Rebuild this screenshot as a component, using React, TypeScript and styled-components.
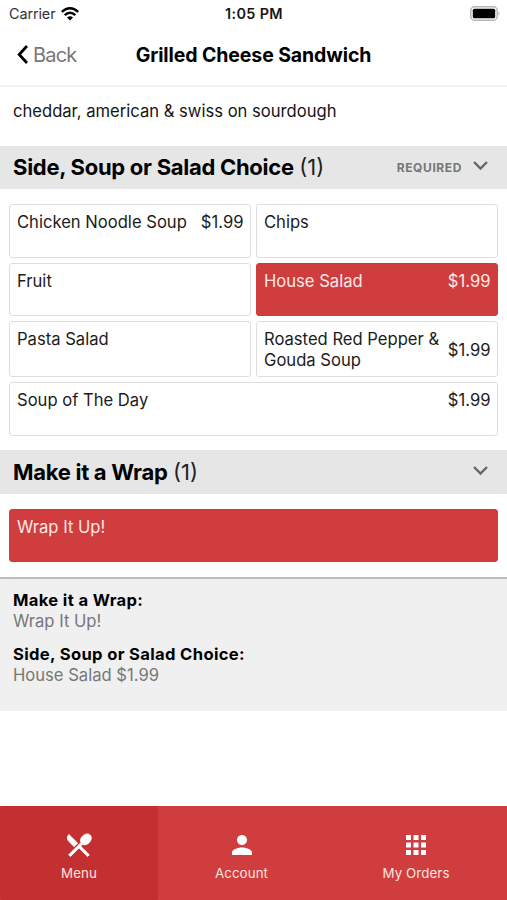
import React from "react";
import styled, { createGlobalStyle } from "styled-components";
import { MdApps, MdPerson, MdRestaurantMenu } from "react-icons/md";

const GlobalStyle = createGlobalStyle`
  * { box-sizing: border-box; }
  body { margin: 0; background: #fff; }
`;

const Screen = styled.div`
  width: 507px;
  height: 900px;
  overflow: hidden;
  display: flex;
  flex-direction: column;
  background: #fff;
  color: #151515;
  font-family: Inter, "Liberation Sans", sans-serif;
  font-size: 16.6px;
  line-height: 21px;
`;

const StatusBar = styled.div`
  height: 27px;
  padding: 0 6px 0 9px;
  display: grid;
  grid-template-columns: 1fr auto 1fr;
  align-items: center;
  font-size: 14.4px;
  letter-spacing: -0.1px;
`;

const Carrier = styled.div`
  display: flex;
  align-items: center;
  gap: 6px;
  color: #333;
`;

const Clock = styled.span`
  padding-right: 2px;
  font-weight: 600;
  font-size: 14.4px;
  letter-spacing: 0.35px;
  color: #151515;
`;

const BatterySlot = styled.div`
  display: flex;
  justify-content: flex-end;
`;

const NavBar = styled.header`
  height: 60px;
  padding: 0 17px 1px;
  display: grid;
  grid-template-columns: 1fr auto 1fr;
  align-items: center;
  border-bottom: 2px solid #f1f1f1;
`;

const BackButton = styled.button`
  display: flex;
  align-items: center;
  gap: 5px;
  padding: 0;
  border: 0;
  background: none;
  color: #777;
  font: inherit;
  font-size: 20px;
  letter-spacing: -0.8px;

  svg { margin-bottom: 2px; }
`;

const Title = styled.h1`
  margin: 0;
  color: #000;
  font-size: 19.5px;
  font-weight: 700;
  letter-spacing: -0.1px;
`;

const Description = styled.p`
  height: 58.5px;
  margin: 0;
  padding: 14px 13px 0;
`;

const SectionHeader = styled.div`
  height: 43.5px;
  padding: 0 18px 0 13px;
  display: flex;
  align-items: center;
  background: #e6e6e6;

  svg { margin-bottom: 2px; }
`;

const SectionTitle = styled.h2`
  flex: 1;
  margin: 0;
  color: #000;
  font-size: 22px;
  line-height: 28px;
  font-weight: 700;
  letter-spacing: -0.28px;
`;

const Count = styled.span`
  margin-left: 0.5px;
  color: #222;
  font-weight: 400;
  letter-spacing: 0;
`;

const Required = styled.span`
  margin-right: 10px;
  color: #777;
  font-size: 12px;
  font-weight: 700;
  letter-spacing: 0.6px;
`;

const Options = styled.div`
  display: grid;
  grid-template-columns: 1fr 1fr;
  gap: 5px;
  padding: 15px 9px 14.5px;
`;

const Option = styled.button<{ $selected?: boolean; $wide?: boolean; $centered?: boolean }>`
  grid-column: ${(p) => (p.$wide ? "1 / -1" : "auto")};
  min-height: 53.5px;
  padding: 7px 6.5px 5px 7px;
  display: flex;
  justify-content: space-between;
  align-items: ${(p) => (p.$centered ? "center" : "flex-start")};
  border: 1px solid ${(p) => (p.$selected ? "#cc3b3d" : "#dedede")};
  border-radius: 3px;
  background: ${(p) => (p.$selected ? "#d03d3f" : "#fff")};
  color: ${(p) => (p.$selected ? "#ffe9e5" : "#1c1c1c")};
  font: inherit;
  text-align: left;
`;

const OptionName = styled.span`
  white-space: pre-line;
`;

const Summary = styled.section`
  height: 134px;
  padding: 11.5px 13px;
  display: flex;
  flex-direction: column;
  gap: 12px;
  border-top: 2px solid #bcbcbc;
  background: #f0f0f0;
`;

const SummaryName = styled.div`
  color: #000;
  font-weight: 700;
  letter-spacing: 0.34px;
`;

const SummaryValue = styled.div`
  color: #777;
`;

const TabBar = styled.nav`
  height: 94.5px;
  margin-top: auto;
  display: grid;
  grid-template-columns: 158px 167px 182px;
  background: #d03d3f;
`;

const Tab = styled.button<{ $active?: boolean }>`
  display: flex;
  flex-direction: column;
  align-items: center;
  gap: 3px;
  padding: 24px 0 0;
  border: 0;
  border-radius: 3px;
  background: ${(p) => (p.$active ? "#c43031" : "transparent")};
  color: #ffe3df;
  font: inherit;
  font-size: 13.3px;
  letter-spacing: 0.1px;

  svg { color: #fff; display: block; }
`;

const MenuIcon = styled(MdRestaurantMenu)`
  path:not([fill="none"]) {
    stroke: #fff;
    stroke-width: 0.6px;
  }
`;

const WifiIcon = () => (
  <svg width="18" height="14" viewBox="0 0 18 14" fill="none" stroke="#000" strokeWidth="2.5">
    <path d="M0.8 4.9Q9 -2.3 17.2 4.9" />
    <path d="M3.7 8.2Q9 3.2 14.3 8.2" />
    <path d="M9 13.5L6 10.6Q9 8 12 10.6Z" fill="#000" stroke="none" />
  </svg>
);

const BatteryIcon = () => (
  <svg width="31" height="15" viewBox="0 0 31 15">
    <rect x="0.8" y="0.8" width="26.4" height="13.4" rx="3.8" fill="#fff" stroke="#b5b5b5" strokeWidth="1.5" />
    <rect x="2.8" y="2.8" width="22.4" height="9.4" rx="1.5" fill="#000" />
    <path d="M28.6 5.2Q30.6 7.5 28.6 9.8Z" fill="#aaa" />
  </svg>
);

const BackIcon = () => (
  <svg width="11" height="20" viewBox="0 0 11 20" fill="none" stroke="#000" strokeWidth="2.8">
    <path d="M10 1L2.2 9.5L10 18" />
  </svg>
);

const ChevronIcon = () => (
  <svg width="17" height="12" viewBox="0 0 17 12" fill="none" stroke="#666" strokeWidth="2.4">
    <path d="M2 2L8.5 8.5L15 2" />
  </svg>
);

type Choice = { name: string; price?: string; selected?: boolean; wide?: boolean; centered?: boolean };

const sides: Choice[] = [
  { name: "Chicken Noodle Soup", price: "$1.99" },
  { name: "Chips" },
  { name: "Fruit" },
  { name: "House Salad", price: "$1.99", selected: true },
  { name: "Pasta Salad" },
  { name: "Roasted Red Pepper &\nGouda Soup", price: "$1.99", centered: true },
  { name: "Soup of The Day", price: "$1.99", wide: true },
];

const wraps: Choice[] = [{ name: "Wrap It Up!", selected: true, wide: true }];

const OptionGrid = ({ choices }: { choices: Choice[] }) => (
  <Options>
    {choices.map((c) => (
      <Option key={c.name} $selected={c.selected} $wide={c.wide} $centered={c.centered}>
        <OptionName>{c.name}</OptionName>
        {c.price && <span>{c.price}</span>}
      </Option>
    ))}
  </Options>
);

export default function App() {
  return (
    <Screen>
      <GlobalStyle />
      <StatusBar>
        <Carrier>
          Carrier
          <WifiIcon />
        </Carrier>
        <Clock>1:05 PM</Clock>
        <BatterySlot>
          <BatteryIcon />
        </BatterySlot>
      </StatusBar>
      <NavBar>
        <BackButton>
          <BackIcon />
          Back
        </BackButton>
        <Title>Grilled Cheese Sandwich</Title>
      </NavBar>
      <Description>cheddar, american &amp; swiss on sourdough</Description>
      <SectionHeader>
        <SectionTitle>
          Side, Soup or Salad Choice <Count>(1)</Count>
        </SectionTitle>
        <Required>REQUIRED</Required>
        <ChevronIcon />
      </SectionHeader>
      <OptionGrid choices={sides} />
      <SectionHeader>
        <SectionTitle>
          Make it a Wrap <Count>(1)</Count>
        </SectionTitle>
        <ChevronIcon />
      </SectionHeader>
      <OptionGrid choices={wraps} />
      <Summary>
        <div>
          <SummaryName>Make it a Wrap:</SummaryName>
          <SummaryValue>Wrap It Up!</SummaryValue>
        </div>
        <div>
          <SummaryName>Side, Soup or Salad Choice:</SummaryName>
          <SummaryValue>House Salad $1.99</SummaryValue>
        </div>
      </Summary>
      <TabBar>
        <Tab $active>
          <MenuIcon size={30} />
          Menu
        </Tab>
        <Tab>
          <MdPerson size={30} />
          Account
        </Tab>
        <Tab>
          <MdApps size={30} />
          My Orders
        </Tab>
      </TabBar>
    </Screen>
  );
}
